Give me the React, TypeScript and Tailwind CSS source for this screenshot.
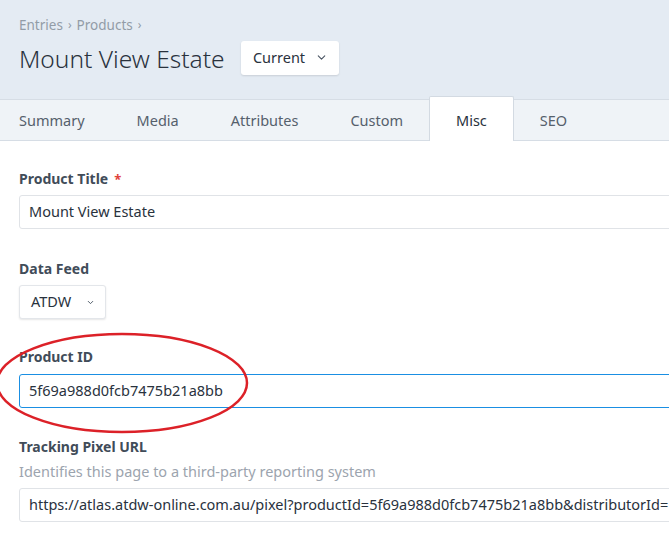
import { ChevronDown } from "lucide-react";

const tabs = ["Summary", "Media", "Attributes", "Custom", "Misc", "SEO"];

const App = () => {
  return (
    <div className="relative w-[669px] h-[550px] overflow-hidden bg-white font-['Noto_Sans',sans-serif] text-[#29323d]">
      {/* Header */}
      <div className="bg-[#e4ebf3] px-[19px] pt-[15px] pb-[23px]">
        <div className="flex items-center gap-[5px] text-[13.5px] leading-[20px] text-[#929ca7]">
          <span>Entries</span>
          <span className="text-[12px]">›</span>
          <span>Products</span>
          <span className="text-[12px]">›</span>
        </div>
        <div className="mt-[4px] flex h-[37px] items-center gap-[17px]">
          <h1 className="pt-[3px] text-[24.5px] leading-[34px] font-light text-[#29323d]">
            Mount View Estate
          </h1>
          <button className="flex h-[34px] w-[98px] items-center justify-center gap-[10px] rounded-[3px] bg-white text-[14.5px] text-[#29323d] shadow-[0_1px_2px_rgba(0,0,0,0.12)]">
            Current
            <ChevronDown className="h-[13px] w-[13px] text-[#4a5563]" strokeWidth={2} />
          </button>
        </div>
      </div>

      {/* Tabs */}
      <div className="flex h-[42px] items-stretch border-y border-[#d6dde5] bg-[#eff3f7]">
        <div className="-ml-[7px] flex items-stretch">
          {tabs.map((t) => {
            const active = t === "Misc";
            return active ? (
              <div
                key={t}
                className="-mt-[4px] -mb-px flex items-center rounded-t-[2px] border-x border-t border-[#d3dae2] bg-white px-[26px] pt-[3px] text-[14.5px] text-[#29323d]"
              >
                {t}
              </div>
            ) : (
              <div key={t} className="flex items-center px-[26px] pt-px text-[14.5px] text-[#55606c]">
                {t}
              </div>
            );
          })}
        </div>
      </div>

      {/* Form */}
      <div className="px-[19px] pt-[28px]">
        <label className="flex items-center gap-[6px] text-[14px] font-bold leading-[20px] text-[#414c59]">
          Product Title <span className="text-[13px] text-[#e0413a]">*</span>
        </label>
        <div className="mt-[6px] flex h-[34px] w-[700px] items-center rounded-[3px] border border-[#e0e3e7] px-[9px] text-[14.5px]">
          Mount View Estate
        </div>

        <label className="mt-[30px] block text-[14px] font-bold leading-[20px] text-[#414c59]">Data Feed</label>
        <div className="mt-[6px] flex h-[34px] w-[87px] items-center justify-between rounded-[3px] border border-[#e3e6ea] bg-white pl-[11px] pr-[10px] text-[14.5px] shadow-[0_1px_2px_rgba(0,0,0,0.1)]">
          ATDW
          <ChevronDown className="h-[9px] w-[9px] text-[#4a5563]" strokeWidth={2.5} />
        </div>

        <label className="mt-[28px] block text-[14px] font-bold leading-[20px] text-[#414c59]">Product ID</label>
        <div className="mt-[7px] flex h-[34px] w-[700px] items-center rounded-[3px] border border-[#1a8fe3] px-[9px] text-[14.5px]">
          5f69a988d0fcb7475b21a8bb
        </div>

        <label className="mt-[29px] block text-[14px] font-bold leading-[20px] text-[#414c59]">
          Tracking Pixel URL
        </label>
        <p className="mt-[4px] text-[14.5px] leading-[20px] text-[#9ca4ae]">
          Identifies this page to a third-party reporting system
        </p>
        <div className="mt-[7px] flex h-[34px] w-[700px] items-center whitespace-nowrap rounded-[3px] border border-[#e0e3e7] px-[9px] text-[14.5px]">
          https://atlas.atdw-online.com.au/pixel?productId=5f69a988d0fcb7475b21a8bb&amp;distributorId=
        </div>
      </div>

      {/* Annotation */}
      <svg className="pointer-events-none absolute left-0 top-0" width="669" height="550">
        <ellipse cx="122" cy="383" rx="125" ry="49" fill="none" stroke="#dc2128" strokeWidth="2.5" />
      </svg>
    </div>
  );
};

export default App;
